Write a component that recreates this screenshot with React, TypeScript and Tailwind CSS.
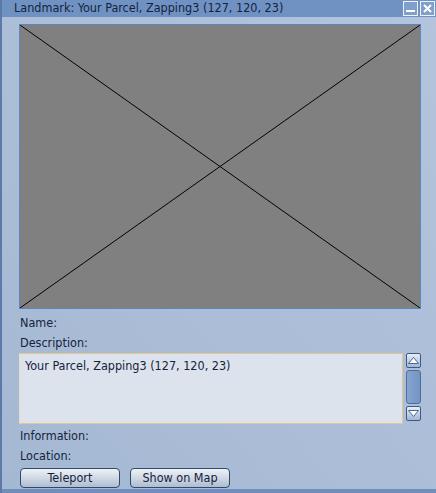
import React from "react";

const font = { fontFamily: '"DejaVu Sans Condensed", "DejaVu Sans", sans-serif' };

function Arrow({ up }: { up: boolean }) {
  return (
    <div className="h-[15px] w-[15px] rounded-[2px] border border-[#3c5a88] bg-gradient-to-b from-[#e8eef6] to-[#9fb6d6] flex items-center justify-center">
      <svg width="11" height="7" viewBox="0 0 11 7">
        {up ? (
          <polygon points="0.5,6.5 5.5,0.5 10.5,6.5" fill="#ffffff" stroke="#4a6894" strokeWidth="1" />
        ) : (
          <polygon points="0.5,0.5 5.5,6.5 10.5,0.5" fill="#ffffff" stroke="#4a6894" strokeWidth="1" />
        )}
      </svg>
    </div>
  );
}

export default function App() {
  return (
    <div
      className="w-[436px] h-[493px] bg-gradient-to-bl from-[#b3c4dc] to-[#a5b8d3] flex flex-col border-l-2 border-[#5d7aa6] text-[#14233d] text-[12.5px] overflow-hidden relative"
      style={font}
    >
      <div className="h-[17px] bg-[#7092c2] flex items-center justify-between pl-[12px] pr-[1px]">
        <span className="text-[12.5px] leading-none text-[#13233f]">Landmark: Your Parcel, Zapping3 (127, 120, 23)</span>
        <div className="flex gap-[2px]">
          <div className="h-[15px] w-[15px] border border-[#eef3fa] bg-[#7f9fcc] flex items-end justify-center pb-[3px]">
            <div className="h-[2px] w-[9px] bg-white" />
          </div>
          <div className="h-[15px] w-[15px] border border-[#eef3fa] bg-[#7f9fcc] flex items-center justify-center">
            <svg width="9" height="9" viewBox="0 0 9 9">
              <path d="M1 1 L8 8 M8 1 L1 8" stroke="#ffffff" strokeWidth="2" />
            </svg>
          </div>
        </div>
      </div>
      <div className="flex flex-col pl-[17px] pt-[7px] flex-1">
        <div className="w-[402px] h-[285px] border border-[#5a86c2] bg-[#808080]">
          <svg width="400" height="283" viewBox="0 0 400 283" className="block">
            <line x1="0" y1="0" x2="400" y2="283" stroke="#000" strokeWidth="1" />
            <line x1="400" y1="0" x2="0" y2="283" stroke="#000" strokeWidth="1" />
          </svg>
        </div>
        <div className="h-[20px] flex items-center pl-[1px] mt-[4px]">Name:</div>
        <div className="h-[20px] flex items-center pl-[1px]">Description:</div>
        <div className="flex gap-[2px]">
          <div className="w-[384px] h-[71px] border border-[#e2c68a] border-l-[#e6dfc2] bg-[#dde3ec] pl-[5px] pt-[3px]">
            Your Parcel, Zapping3 (127, 120, 23)
          </div>
          <div className="flex flex-col items-center gap-[2px] w-[16px]">
            <Arrow up />
            <div className="w-[15px] h-[34px] rounded-[3px] border border-[#4d6d9c] bg-gradient-to-r from-[#86a6d0] to-[#7393c2]" />
            <Arrow up={false} />
          </div>
        </div>
        <div className="h-[20px] flex items-center pl-[1px] mt-[2px]">Information:</div>
        <div className="h-[20px] flex items-center pl-[1px]">Location:</div>
        <div className="flex gap-[10px] mt-[2px] pl-[1px]">
          <button className="w-[100px] h-[20px] rounded-[4px] border border-[#34486a] bg-gradient-to-b from-[#eef2f7] via-[#cfd8e4] to-[#aebdd2] text-[12.5px] text-[#14233d] leading-none">
            Teleport
          </button>
          <button className="w-[100px] h-[20px] rounded-[4px] border border-[#34486a] bg-gradient-to-b from-[#eef2f7] via-[#cfd8e4] to-[#aebdd2] text-[12.5px] text-[#14233d] leading-none">
            Show on Map
          </button>
        </div>
      </div>
      <div className="h-[4px] bg-[#6f8dbd]" />
    </div>
  );
}
